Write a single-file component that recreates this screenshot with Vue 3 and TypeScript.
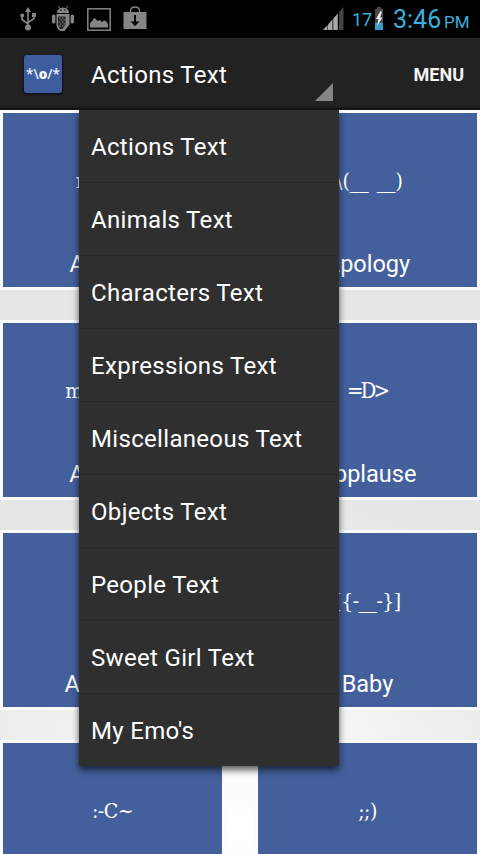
<script setup lang="ts">
interface Emo {
  face: string
  label: string
  fit?: string
}

const categories: string[] = [
  'Actions Text',
  'Animals Text',
  'Characters Text',
  'Expressions Text',
  'Miscellaneous Text',
  'Objects Text',
  'People Text',
  'Sweet Girl Text',
  "My Emo's",
]

const emos: Emo[] = [
  { face: 'n(_ __)n', label: 'Amazed' },
  { face: '\\(__ __)', label: 'Apology', fit: 'wide' },
  { face: 'm(__ __)m', label: 'Amused' },
  { face: '=D>', label: 'Applause', fit: 'tight' },
  { face: '', label: 'Awkward' },
  { face: '[{-__-}]', label: 'Baby', fit: 'snug' },
  { face: ':-C~', label: '', fit: 'snug' },
  { face: ';;)', label: '', fit: 'snug' },
]
</script>

<template>
  <div class="screen">
    <header class="status">
      <div class="notices">
        <svg class="usb" width="16" height="24" viewBox="0 0 16 24" fill="none" stroke="#858585" stroke-width="1.6">
          <path d="M8 4V20M2 9v3.5l6 4.5M14 8v3.5l-6 4" />
          <path d="M8 0l3 5H5z" fill="#858585" stroke="none" />
          <circle cx="8" cy="20.5" r="3" fill="#858585" stroke="none" />
          <circle cx="2.2" cy="8.5" r="2" fill="#858585" stroke="none" />
          <path d="M12 6h4v4h-4z" fill="#858585" stroke="none" />
        </svg>
        <svg class="droid" width="22" height="26" viewBox="0 0 22 26" fill="#858585">
          <path d="M5 7a6 5.5 0 0 1 12 0z" />
          <path d="M6 0l2.500 3M16 0l-2.500 3" stroke="#858585" stroke-width="1" />
          <rect x="0" y="8.500" width="3.400" height="9" rx="1.500" />
          <rect x="18.600" y="8.500" width="3.400" height="9" rx="1.500" />
          <path d="M4.500 8h13v10.500l-5 6.500H9q-4-1-4.500-6z" />
          <path d="M6 10.500h7.500v8l-3 4.500H8.500q-2.500-2-2.500-5z" fill="#222" />
          <path d="M7 12h1.500M10 12h1.500M8.500 14H10M11.500 14H13M6.500 16H8M10 16h1.500M8 18h1.500M11.500 18H13M7 20h1.500M10 20h1.500" stroke="#909090" stroke-width="1.200" />
          <path d="M8.500 3.500h1.200v1.200H8.500zM12.400 3.500h1.200v1.200h-1.200z" fill="#000" />
        </svg>
        <svg class="picture" width="24" height="23" viewBox="0 0 24 23">
          <rect x=".8" y=".8" width="22.400" height="21.400" fill="none" stroke="#858585" stroke-width="1.500" />
          <path d="M3 19.500V15q2-1 3.500-4.500 2-1 3 1.500l1.500 1 2-1 2 2 2-1.500 2 .5 2 3v3.500z" fill="#858585" />
        </svg>
        <svg class="bag" width="24" height="24" viewBox="0 0 24 24">
          <path d="M7.500 7V4.500Q8 1 12 1t4.500 3.500V7" fill="none" stroke="#858585" stroke-width="1.300" />
          <path d="M.5 6h23v17H.5z" fill="#858585" />
          <path d="M11 9h2v6.500h3.500L12 20l-4.500-4.500H11z" fill="#000" />
        </svg>
      </div>
      <div class="system">
        <svg class="signal" width="21" height="23" viewBox="0 0 21 23">
          <path d="M0 23L4.500 18V23z" fill="#a9a9a9" />
          <path d="M5 17.500L9.500 12.500V23H5z" fill="#a9a9a9" />
          <path d="M10.300 11.500L14.800 6.500V23h-4.500z" fill="#a9a9a9" />
          <path d="M16 5L20.500 0V23H16z" fill="#444" />
        </svg>
        <span class="percent">17</span>
        <svg class="battery" width="8" height="23" viewBox="0 0 8 23">
          <path d="M2 0h4v2h2v14H0V2h2z" fill="#494949" />
          <path d="M0 16h8v7H0z" fill="#3b9ccb" />
          <path d="M5.500 4L1 12h2.500L2 19l5.500-8.500H5L7 5z" fill="#eee" />
        </svg>
        <span class="clock">3:46</span>
        <span class="meridiem">PM</span>
      </div>
    </header>

    <nav class="bar">
      <div class="logo"><span>*\</span><b>o</b><span>/*</span></div>
      <div class="spinner">
        <span>Actions Text</span>
        <svg class="corner" width="18" height="18" viewBox="0 0 18 18"><path d="M18 0v18H0z" fill="#858585" /></svg>
        <ul class="dropdown">
          <li v-for="name in categories" :key="name">{{ name }}</li>
        </ul>
      </div>
      <span class="menu">MENU</span>
    </nav>

    <main class="grid">
      <article v-for="(emo, i) in emos" :key="i" class="card">
        <span class="face" :class="emo.fit">{{ emo.face }}</span>
        <span class="label">{{ emo.label }}</span>
      </article>
    </main>
  </div>
</template>

<style>
body {
  margin: 0;
  overflow: hidden;
}
</style>

<style scoped>
.screen {
  width: 480px;
  height: 854px;
  overflow: hidden;
  display: flex;
  flex-direction: column;
  font-family: Roboto, "Noto Sans", sans-serif;
  color: #fff;
  background: radial-gradient(circle at 240px 830px, #fff 0, #f8f8f8 90px, #e6e6e6 370px);
}
.status {
  flex: none;
  height: 38px;
  box-sizing: border-box;
  padding: 0 11px 0 20px;
  background: #000;
  display: flex;
  justify-content: space-between;
}
.notices {
  display: flex;
  align-items: flex-start;
  padding-top: 6px;
}
.usb { margin-top: 1px; }
.droid { margin-left: 16px; }
.picture { margin: 2px 0 0 13px; }
.bag { margin-left: 12px; }
.system {
  display: flex;
  align-items: flex-start;
  color: #36b1dd;
  white-space: nowrap;
}
.signal { margin: 7px 8px 0 0; }
.percent {
  width: 20px;
  font-size: 18px;
  line-height: 39px;
}
.battery { margin: 7px 10px 0 3px; }
.clock {
  width: 48px;
  font-size: 25px;
  line-height: 40px;
}
.meridiem {
  width: 25px;
  margin-left: 3px;
  font-size: 17px;
  line-height: 44px;
}
.bar {
  flex: none;
  height: 72px;
  box-sizing: border-box;
  display: flex;
  align-items: center;
  padding: 0 16px 0 24px;
  background: linear-gradient(#2c2c2c 0 1px, #222 1px 68px, #171717 70px 72px);
}
.logo {
  width: 38px;
  height: 38px;
  border-radius: 3px;
  background: #3d5d9f;
  box-shadow: 0 1px 2px 1px #101218;
  color: #e4f0ff;
  display: flex;
  align-items: center;
  justify-content: center;
  font: 600 13.5px/38px "Open Sans", sans-serif;
}
.logo b {
  font-weight: 800;
  color: #fff;
}
.spinner {
  position: relative;
  align-self: stretch;
  width: 260px;
  margin-left: 17px;
  box-sizing: border-box;
  padding-left: 12px;
  font-size: 24px;
  line-height: 74px;
  letter-spacing: 0.32px;
}
.corner {
  position: absolute;
  right: 6px;
  bottom: 9px;
}
.dropdown {
  position: absolute;
  z-index: 2;
  top: 72px;
  left: 0;
  width: 260px;
  height: 656px;
  margin: 0;
  padding: 0;
  list-style: none;
  line-height: 75px;
  background: #2f2f2f;
  border-radius: 0 0 2px 2px;
  box-shadow: 0 4px 7px rgba(0, 0, 0, 0.65);
}
.dropdown li {
  height: 73px;
  box-sizing: border-box;
  padding-left: 12px;
  border-bottom: 1px solid #292929;
}
.dropdown li:last-child {
  height: 72px;
  border: 0;
}
.menu {
  margin-left: auto;
  font-size: 18px;
  font-weight: 700;
  color: #f4f4f4;
}
.grid {
  display: grid;
  grid-template-columns: 225px 225px;
  grid-auto-rows: 180px;
  gap: 30px;
}
.card {
  box-sizing: border-box;
  border: 3px solid #fbfbfd;
  background: #43609c;
  display: flex;
  flex-direction: column;
  align-items: center;
  white-space: pre;
}
.face {
  height: 134px;
  font: 21px/136px "DejaVu Serif Condensed", "DejaVu Serif", serif;
  font-stretch: condensed;
}
.wide {
  word-spacing: 2px;
  padding-left: 4px;
}
.tight {
  font-size: 22px;
  letter-spacing: -3px;
  padding-right: 1px;
}
.snug {
  letter-spacing: -0.5px;
}
.label {
  font-size: 23.5px;
  line-height: 34px;
}
</style>
